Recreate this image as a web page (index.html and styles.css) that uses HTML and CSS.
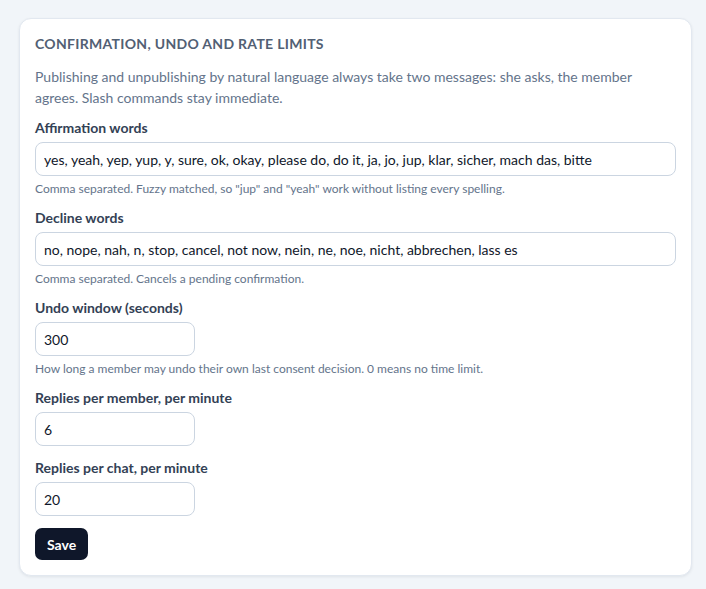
FILE: index.html
```html
<!doctype html>
<html lang="en">
<head>
	<meta charset="UTF-8">
	<title>Confirmation settings</title>
	<link rel="stylesheet" href="styles.css">
</head>
<body>
<div class="card">
	<h2 class="card_title">Confirmation, undo and rate limits</h2>
	<p class="card_desc">Publishing and unpublishing by natural language always take two messages: she asks, the member agrees. Slash commands stay immediate.</p>
	<div class="field">
		<label class="field_label">Affirmation words</label>
		<input class="field_input" type="text" value="yes, yeah, yep, yup, y, sure, ok, okay, please do, do it, ja, jo, jup, klar, sicher, mach das, bitte">
		<div class="field_help">Comma separated. Fuzzy matched, so "jup" and "yeah" work without listing every spelling.</div>
	</div>
	<div class="field">
		<label class="field_label">Decline words</label>
		<input class="field_input" type="text" value="no, nope, nah, n, stop, cancel, not now, nein, ne, noe, nicht, abbrechen, lass es">
		<div class="field_help">Comma separated. Cancels a pending confirmation.</div>
	</div>
	<div class="field">
		<label class="field_label">Undo window (seconds)</label>
		<input class="field_input small" type="text" value="300">
		<div class="field_help">How long a member may undo their own last consent decision. 0 means no time limit.</div>
	</div>
	<div class="field">
		<label class="field_label">Replies per member, per minute</label>
		<input class="field_input small" type="text" value="6">
	</div>
	<div class="field">
		<label class="field_label">Replies per chat, per minute</label>
		<input class="field_input small" type="text" value="20">
	</div>
	<div class="actions">
		<button class="btn_save" type="button">Save</button>
	</div>
</div>
</body>
</html>
```

FILE: styles.css
```css
body{margin: 0;padding: 18px 14px 13px 19px;background: #f1f5f9;font-family: Lato, "Noto Sans", sans-serif;color: #1e293b;}
.card{background: #fff;border: 1px solid #e2e8f0;border-radius: 12px;box-shadow: 0 1px 3px rgba(15,23,42,.08);padding: 15px;display: flex;flex-direction: column;gap: 12px;}
.card_title{margin: 0;font-size: 14px;line-height: 20px;font-weight: 700;letter-spacing: .3px;text-transform: uppercase;color: #526074;}
.card_desc{margin: 0 0 -2px;font-size: 14px;line-height: 21px;color: #64748b;}
.field{display: flex;flex-direction: column;}
.field_label{font-size: 14px;line-height: 20px;font-weight: 700;color: #334155;margin-bottom: 4px;}
.field_input{box-sizing: border-box;height: 34px;border: 1px solid #cbd5e1;border-radius: 8px;padding: 0 8px;font-family: inherit;font-size: 14px;color: #0f172a;background: #fff;width: 100%;}
.field_input.small{width: 160px;}
.field_help{margin-top: 5px;font-size: 12px;line-height: 15px;color: #64748b;}
.btn_save{height: 32px;padding: 0 12px;border: 0;border-radius: 7px;background: #0f172a;color: #fff;font-family: inherit;font-size: 14px;font-weight: 700;}
```
